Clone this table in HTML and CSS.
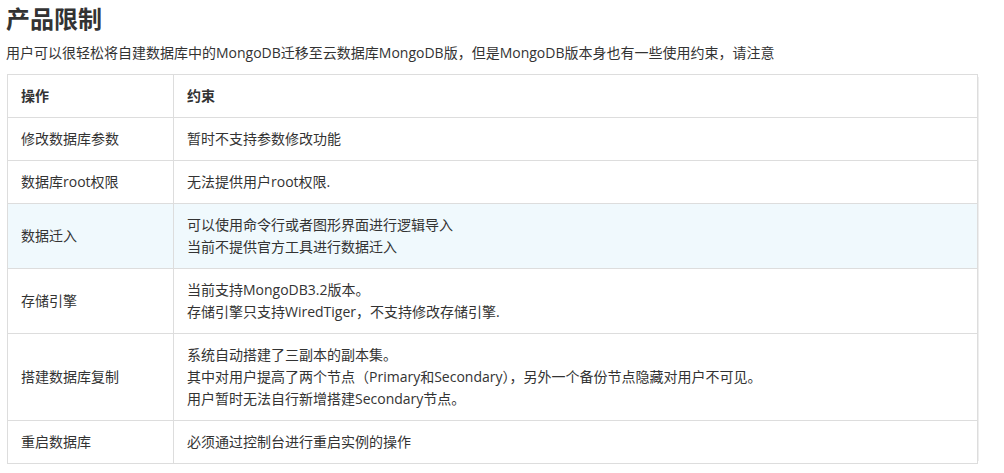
FILE: index.html
```html
<!DOCTYPE html>
<html lang="zh-CN">
<head>
    <meta charset="UTF-8">
    <title>产品限制</title>
    <link rel="stylesheet" href="styles.css">
</head>
<body>
    <div class="doc">
        <h2 class="doc-title">产品限制</h2>
        <p class="doc-intro">用户可以很轻松将自建数据库中的MongoDB迁移至云数据库MongoDB版，但是MongoDB版本身也有一些使用约束，请注意</p>

        <table class="limit-table">
            <thead>
                <tr>
                    <th class="col-op">操作</th>
                    <th>约束</th>
                </tr>
            </thead>
            <tbody>
                <tr>
                    <td>修改数据库参数</td>
                    <td>暂时不支持参数修改功能</td>
                </tr>
                <tr>
                    <td>数据库root权限</td>
                    <td>无法提供用户root权限.</td>
                </tr>
                <tr class="hover">
                    <td>数据迁入</td>
                    <td>可以使用命令行或者图形界面进行逻辑导入<br>当前不提供官方工具进行数据迁入</td>
                </tr>
                <tr>
                    <td>存储引擎</td>
                    <td>当前支持MongoDB3.2版本。<br>存储引擎只支持WiredTiger，不支持修改存储引擎.</td>
                </tr>
                <tr>
                    <td>搭建数据库复制</td>
                    <td>系统自动搭建了三副本的副本集。<br>其中对用户提高了两个节点（Primary和Secondary），另外一个备份节点隐藏对用户不可见。<br>用户暂时无法自行新增搭建Secondary节点。</td>
                </tr>
                <tr>
                    <td>重启数据库</td>
                    <td>必须通过控制台进行重启实例的操作</td>
                </tr>
            </tbody>
        </table>
    </div>
</body>
</html>
```

FILE: styles.css
```css
body {
    margin: 0;
    background: #fff;
    font-family: "Open Sans", "Noto Sans CJK SC", sans-serif;
    color: #333;
}

.doc {
    padding: 3px 6px 0 6px;
}

.doc-title {
    margin: 0;
    font-family: "Noto Sans CJK SC", sans-serif;
    font-size: 24px;
    line-height: 30px;
    font-weight: bold;
    color: #333;
}

.doc-intro {
    margin: 10px 0 0 0;
    font-size: 14px;
    line-height: 20px;
    color: #333;
}

.limit-table {
    margin-top: 11px;
    width: 971px;
    margin-left: 1px;
    border-collapse: collapse;
    font-size: 14px;
    line-height: 22px;
    color: #333;
    box-shadow: 4px 0 0 -3px #eee;
}

.limit-table th,
.limit-table td {
    border: 1px solid #ddd;
    padding: 10px 13px;
    text-align: left;
    vertical-align: middle;
}

.limit-table th {
    font-weight: bold;
}

.col-op {
    width: 139px;
}

.limit-table tr.hover td {
    background-color: #f0f9fd;
}
```
